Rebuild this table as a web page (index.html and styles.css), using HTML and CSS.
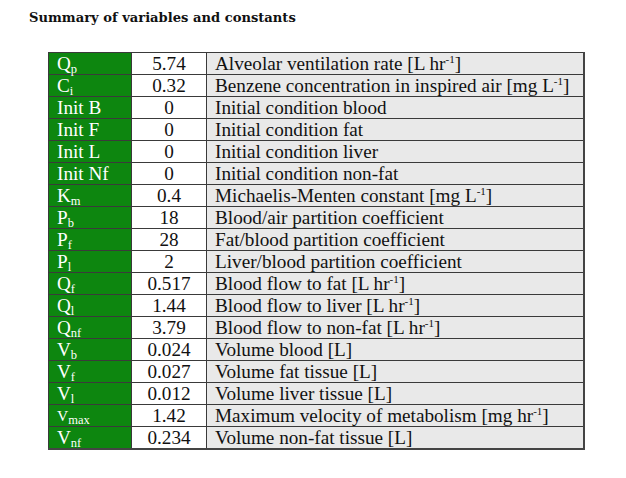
FILE: index.html
```html
<!DOCTYPE html>
<html>
<head>
<meta charset="utf-8">
<link rel="stylesheet" href="styles.css">
</head>
<body>
<h1 class="title">Summary of variables and constants</h1>
<table class="vars">
<tbody>
<tr><td class="sym">Q<sub>p</sub></td><td class="val">5.74</td><td class="desc">Alveolar ventilation rate [L hr<sup>-1</sup>]</td></tr>
<tr><td class="sym">C<sub>i</sub></td><td class="val">0.32</td><td class="desc">Benzene concentration in inspired air [mg L<sup>-1</sup>]</td></tr>
<tr><td class="sym">Init B</td><td class="val">0</td><td class="desc">Initial condition blood</td></tr>
<tr><td class="sym">Init F</td><td class="val">0</td><td class="desc">Initial condition fat</td></tr>
<tr><td class="sym">Init L</td><td class="val">0</td><td class="desc">Initial condition liver</td></tr>
<tr><td class="sym">Init Nf</td><td class="val">0</td><td class="desc">Initial condition non-fat</td></tr>
<tr><td class="sym">K<sub>m</sub></td><td class="val">0.4</td><td class="desc">Michaelis-Menten constant [mg L<sup>-1</sup>]</td></tr>
<tr><td class="sym">P<sub>b</sub></td><td class="val">18</td><td class="desc">Blood/air partition coefficient</td></tr>
<tr><td class="sym">P<sub>f</sub></td><td class="val">28</td><td class="desc">Fat/blood partition coefficient</td></tr>
<tr><td class="sym">P<sub>l</sub></td><td class="val">2</td><td class="desc">Liver/blood partition coefficient</td></tr>
<tr><td class="sym">Q<sub>f</sub></td><td class="val">0.517</td><td class="desc">Blood flow to fat [L hr<sup>-1</sup>]</td></tr>
<tr><td class="sym">Q<sub>l</sub></td><td class="val">1.44</td><td class="desc">Blood flow to liver [L hr<sup>-1</sup>]</td></tr>
<tr><td class="sym">Q<sub>nf</sub></td><td class="val">3.79</td><td class="desc">Blood flow to non-fat [L hr<sup>-1</sup>]</td></tr>
<tr><td class="sym">V<sub>b</sub></td><td class="val">0.024</td><td class="desc">Volume blood [L]</td></tr>
<tr><td class="sym">V<sub>f</sub></td><td class="val">0.027</td><td class="desc">Volume fat tissue [L]</td></tr>
<tr><td class="sym">V<sub>l</sub></td><td class="val">0.012</td><td class="desc">Volume liver tissue [L]</td></tr>
<tr><td class="sym"><span class="small">V</span><sub>max</sub></td><td class="val">1.42</td><td class="desc">Maximum velocity of metabolism [mg hr<sup>-1</sup>]</td></tr>
<tr><td class="sym">V<sub>nf</sub></td><td class="val">0.234</td><td class="desc">Volume non-fat tissue [L]</td></tr>
</tbody>
</table>
</body>
</html>
```
FILE: styles.css
```css
html, body {
  margin: 0;
  padding: 0;
  background: #ffffff;
}
body {
  width: 626px;
  height: 478px;
  overflow: hidden;
}
.title {
  margin: 0;
  padding: 10px 0 0 29px;
  font-family: "DejaVu Serif", "Liberation Serif", serif;
  font-weight: bold;
  font-size: 13.1px;
  line-height: 16px;
  color: #111;
}
.vars {
  margin: 26px 0 0 48px;
  border-collapse: collapse;
  font-family: "Liberation Serif", "Times New Roman", serif;
  font-size: 19.2px;
  color: #111;
  border-right: 2px solid #444;
  border-bottom: 2px solid #444;
}
.vars td {
  border: 1px solid #3a3a3a;
  height: 21px;
  padding: 0;
  line-height: 20px;
  white-space: nowrap;
}
.sym {
  width: 74px;
  padding-left: 8px !important;
  background: #0d860f;
  color: #ffffff;
}
.val {
  width: 74px;
  text-align: center;
  background: #ffffff;
}
.desc {
  width: 368px;
  padding-left: 8px !important;
  background: #e9e9e9;
}
sub {
  font-size: 12.5px;
  line-height: 0;
  vertical-align: -3px;
}
sup {
  font-size: 11px;
  line-height: 0;
  vertical-align: 7px;
}
.small {
  font-size: 15.5px;
}
```
